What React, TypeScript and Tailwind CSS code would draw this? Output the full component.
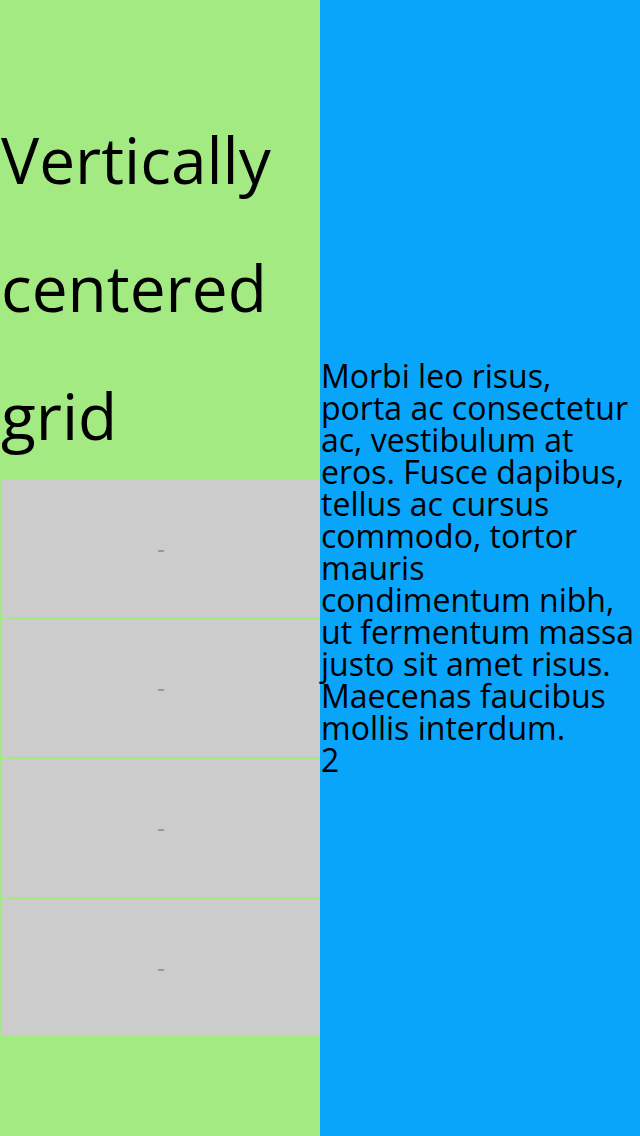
import React from "react";

const boxes = ["h-[137px]", "h-[138px]", "h-[138px]", "h-[137px]"];

export default function App() {
  return (
    <div
      className="flex w-[640px] h-[1136px] text-black"
      style={{ fontFamily: '"Open Sans", sans-serif' }}
    >
      {/* Left column */}
      <div className="w-[320px] h-full bg-[#a4ea83] flex flex-col">
        <h1 className="pt-[96px] pl-[1px] text-[64px] leading-[128px] font-normal">
          Vertically centered grid
        </h1>
        <div className="ml-[2px] flex flex-col gap-[2px]">
          {boxes.map((h, i) => (
            <div
              key={i}
              className={`${h} bg-[#cccccc] flex items-center justify-center`}
            >
              <div className="w-[6px] h-[2px] mt-[4px] bg-[#999999]" />
            </div>
          ))}
        </div>
      </div>

      {/* Right column */}
      <div className="w-[320px] h-full bg-[#08a5fb] flex items-center">
        <div className="pl-[1px] text-[32px] leading-[32px]">
          <p>
            Morbi leo risus, porta ac consectetur ac, vestibulum at eros. Fusce
            dapibus, tellus ac cursus commodo, tortor mauris condimentum nibh,
            ut fermentum massa justo sit amet risus. Maecenas faucibus mollis
            interdum.
          </p>
          <div>2</div>
        </div>
      </div>
    </div>
  );
}
